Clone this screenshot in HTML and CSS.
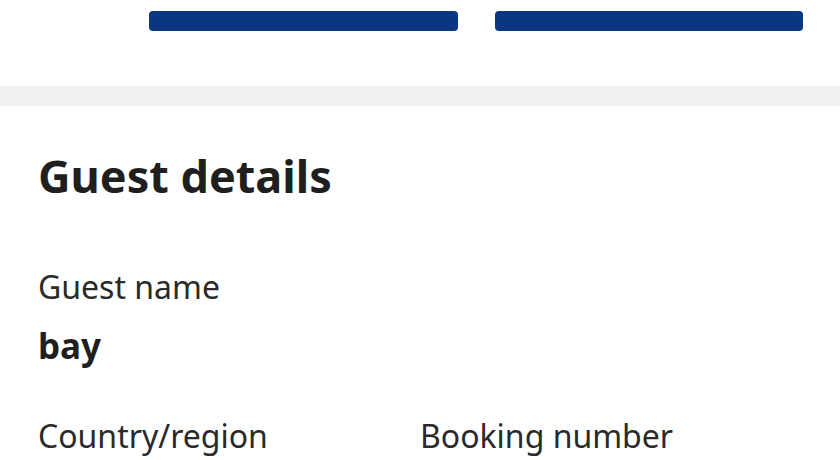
FILE: index.html
```html
<!DOCTYPE html>
<html>
<head>
    <meta charset="utf-8">
    <title>Guest details</title>
    <link rel="stylesheet" href="styles.css">
</head>

<body>
    <div class="actions">
        <div class="action-btn"></div>
        <div class="action-btn"></div>
    </div>

    <div class="divider"></div>

    <div class="details">
        <h2 class="details-title">Guest details</h2>
        <div class="field-grid">
            <div class="field field-wide">
                <div class="field-label">Guest name</div>
                <div class="field-value">bay</div>
            </div>
            <div class="field">
                <div class="field-label">Country/region</div>
            </div>
            <div class="field">
                <div class="field-label">Booking number</div>
            </div>
        </div>
    </div>
</body>
</html>
```

FILE: styles.css
```css
body {
    margin: 0;
    background: #fff;
    font-family: "Noto Sans", "DejaVu Sans", sans-serif;
    color: #222;
}

.actions {
    display: flex;
    gap: 37px;
    height: 86px;
    padding: 11px 37px 0 149px;
    box-sizing: border-box;
}
.action-btn {
    flex: 1;
    height: 20px;
    background: #0a3784;
    border-radius: 4px;
}

.divider {
    height: 20px;
    background: #f0f0f0;
}

.details {
    padding: 0 38px;
}
.details-title {
    margin: 42px 0 0;
    font-size: 45px;
    line-height: 56px;
    font-weight: 700;
    color: #1f1f1f;
}

.field-grid {
    display: grid;
    grid-template-columns: 1fr 1fr;
    row-gap: 48px;
    margin-top: 63px;
}
.field-wide {
    grid-column: 1 / span 2;
}
.field-label {
    font-size: 32px;
    line-height: 40px;
    color: #2a2a2a;
}
.field-value {
    margin-top: 17px;
    font-size: 35px;
    line-height: 44px;
    font-weight: 700;
    color: #1f1f1f;
}
```
